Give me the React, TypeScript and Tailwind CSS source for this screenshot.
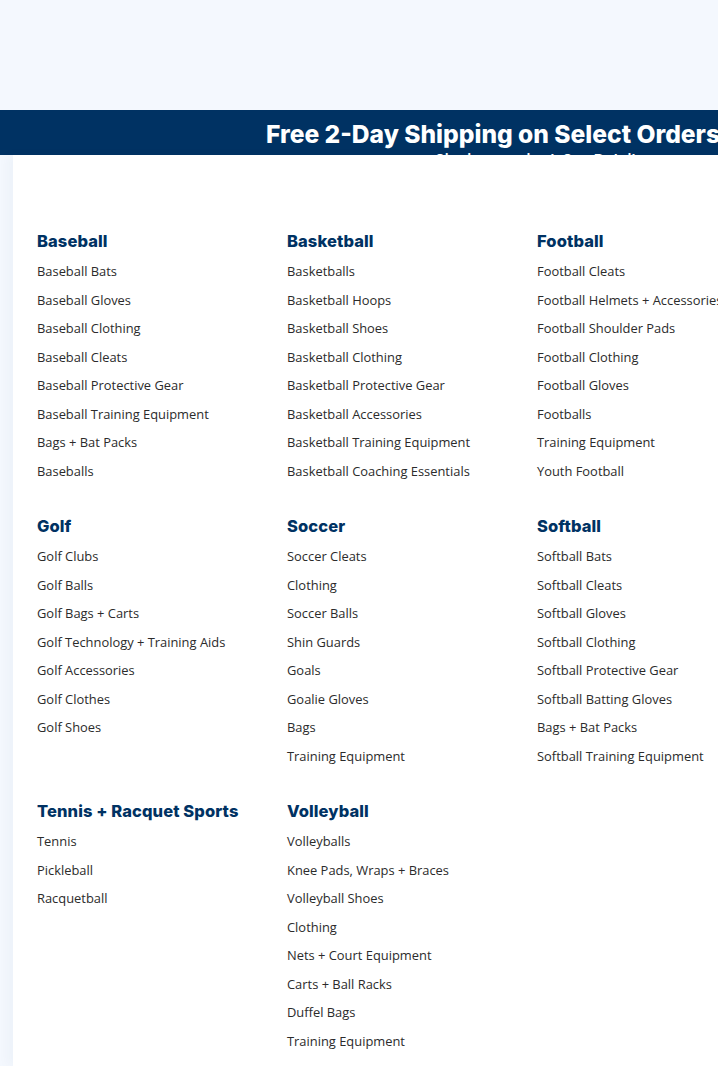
const SECTIONS: { title: string; items: string[] }[] = [
  {
    title: "Baseball",
    items: [
      "Baseball Bats",
      "Baseball Gloves",
      "Baseball Clothing",
      "Baseball Cleats",
      "Baseball Protective Gear",
      "Baseball Training Equipment",
      "Bags + Bat Packs",
      "Baseballs",
    ],
  },
  {
    title: "Basketball",
    items: [
      "Basketballs",
      "Basketball Hoops",
      "Basketball Shoes",
      "Basketball Clothing",
      "Basketball Protective Gear",
      "Basketball Accessories",
      "Basketball Training Equipment",
      "Basketball Coaching Essentials",
    ],
  },
  {
    title: "Football",
    items: [
      "Football Cleats",
      "Football Helmets + Accessories",
      "Football Shoulder Pads",
      "Football Clothing",
      "Football Gloves",
      "Footballs",
      "Training Equipment",
      "Youth Football",
    ],
  },
  {
    title: "Golf",
    items: [
      "Golf Clubs",
      "Golf Balls",
      "Golf Bags + Carts",
      "Golf Technology + Training Aids",
      "Golf Accessories",
      "Golf Clothes",
      "Golf Shoes",
    ],
  },
  {
    title: "Soccer",
    items: [
      "Soccer Cleats",
      "Clothing",
      "Soccer Balls",
      "Shin Guards",
      "Goals",
      "Goalie Gloves",
      "Bags",
      "Training Equipment",
    ],
  },
  {
    title: "Softball",
    items: [
      "Softball Bats",
      "Softball Cleats",
      "Softball Gloves",
      "Softball Clothing",
      "Softball Protective Gear",
      "Softball Batting Gloves",
      "Bags + Bat Packs",
      "Softball Training Equipment",
    ],
  },
  {
    title: "Tennis + Racquet Sports",
    items: ["Tennis", "Pickleball", "Racquetball"],
  },
  {
    title: "Volleyball",
    items: [
      "Volleyballs",
      "Knee Pads, Wraps + Braces",
      "Volleyball Shoes",
      "Clothing",
      "Nets + Court Equipment",
      "Carts + Ball Racks",
      "Duffel Bags",
      "Training Equipment",
    ],
  },
];

function Section({ title, items }: { title: string; items: string[] }) {
  return (
    <div className="mb-[26px] w-[250px]">
      <h3 className="h-[30px] whitespace-nowrap text-[16.5px] font-extrabold leading-[30px] tracking-[0.1px] text-[#003263] [font-family:Inter,'DejaVu_Sans',sans-serif]">
        {title}
      </h3>
      <ul className="mt-[1px]">
        {items.map((item) => (
          <li key={item} className="h-[28.5px] whitespace-nowrap">
            <a
              href="#"
              className="text-[12.9px] leading-[28.5px] text-[#2b2b2b] [font-family:'Open_Sans',sans-serif]"
            >
              {item}
            </a>
          </li>
        ))}
      </ul>
    </div>
  );
}

export default function App() {
  return (
    <div className="h-[1066px] w-[718px] overflow-hidden bg-[#f4f8fe]">
      <div className="h-[110px]" />
      <div className="h-[45px] overflow-hidden bg-[#003263] pl-[266px] pt-[8px] text-white [font-family:Inter,sans-serif]">
        <div className="whitespace-nowrap text-[24.6px] font-extrabold leading-[32px]">
          Free 2-Day Shipping on Select Orders
        </div>
        <div className="whitespace-nowrap pl-[169px] text-[15px] font-semibold leading-[20px]">
          Signing required. See Details
        </div>
      </div>
      <div className="ml-[13px] h-[911px] bg-white pl-[24px] pt-[71px] shadow-[-6px_0_10px_rgba(0,50,99,0.03)]">
        <div className="grid w-[750px] grid-cols-[250px_250px_250px]">
          {SECTIONS.map((s) => (
            <Section key={s.title} title={s.title} items={s.items} />
          ))}
        </div>
      </div>
    </div>
  );
}
